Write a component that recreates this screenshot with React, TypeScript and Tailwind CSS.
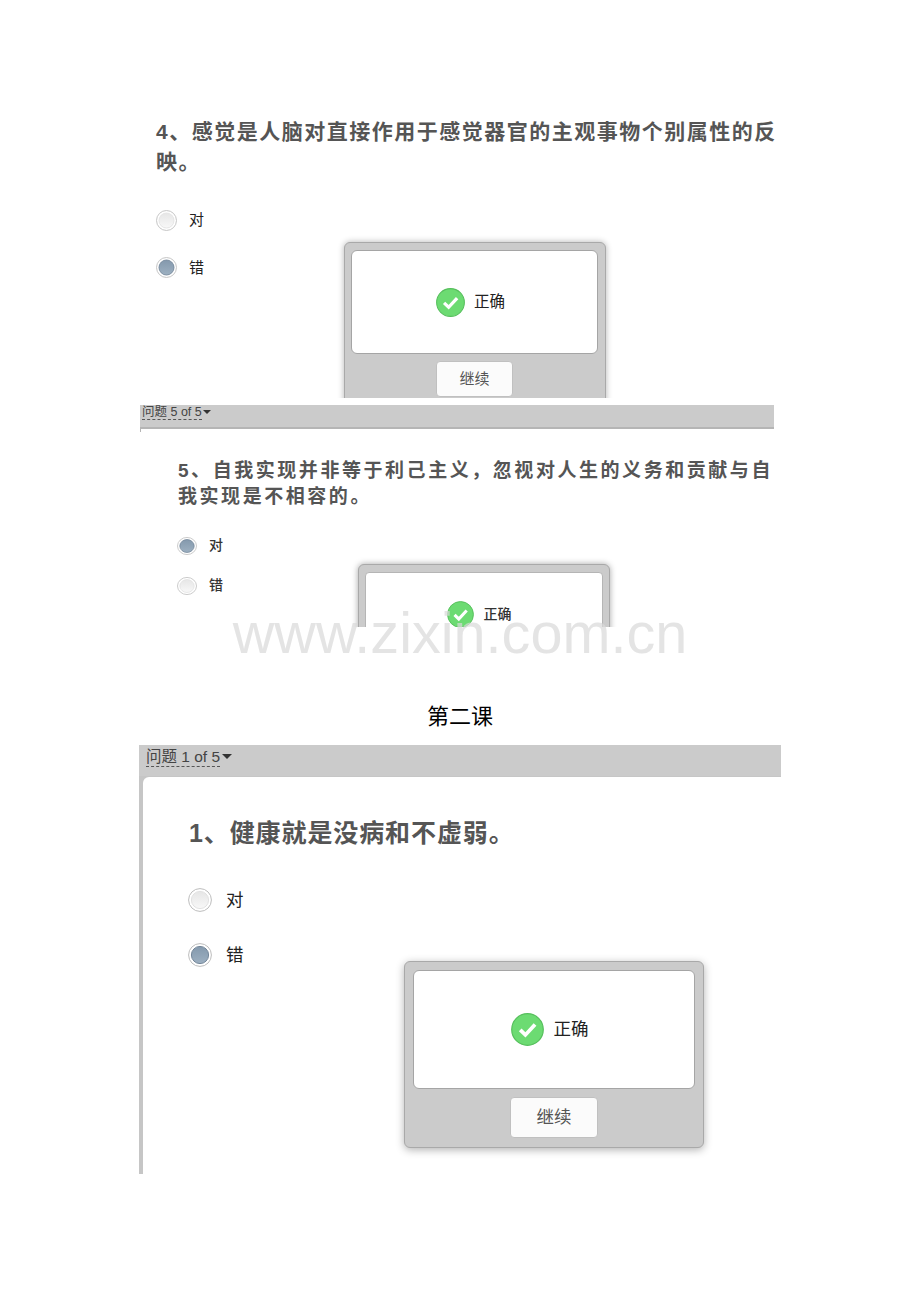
import React from 'react';

const cjk = "font-['Liberation_Sans','Noto_Sans_CJK_SC',sans-serif]";

const CheckBadge = ({ size }: { size: number }) => (
    <svg width={size} height={size} viewBox="0 0 28 28" className="shrink-0">
        <circle cx="14" cy="14" r="13.4" fill="#6cdb72" stroke="#56bf5c" strokeWidth="1" />
        <path d="M7.8 14.4 L12.2 18.6 L20.4 9.8" fill="none" stroke="#ffffff" strokeWidth="3.2" />
    </svg>
);

const Radio = ({ checked, size, height }: { checked?: boolean; size: number; height?: number }) => (
    <svg width={size} height={height ?? size} viewBox="0 0 24 24" preserveAspectRatio="none" className="shrink-0">
        <defs>
            <linearGradient id="radio-off" x1="0" y1="0" x2="0" y2="1">
                <stop offset="0" stopColor="#e6e6e6" />
                <stop offset="1" stopColor="#f8f8f8" />
            </linearGradient>
            <linearGradient id="radio-on" x1="0" y1="0" x2="0" y2="1">
                <stop offset="0" stopColor="#8499ad" />
                <stop offset="1" stopColor="#9db0c1" />
            </linearGradient>
        </defs>
        <circle cx="12" cy="12" r="11.4" fill="#ffffff" stroke="#bdbdbd" strokeWidth="1" />
        <circle cx="12" cy="12" r="8.6" fill={checked ? 'url(#radio-on)' : 'url(#radio-off)'} stroke={checked ? '#74879a' : '#e2e2e2'} strokeWidth="1" />
    </svg>
);

const TopBar = ({ label, className, textClass, arrowClass }: { label: string; className: string; textClass: string; arrowClass: string }) => (
    <div className={`flex items-start bg-[#cbcbcb] ${className}`}>
        <span className={`border-b border-dashed border-[#555] text-[#444] ${textClass}`}>{label}</span>
        <span className={`border-x-transparent border-t-[#333] ${arrowClass}`}></span>
    </div>
);

export default function App() {
    return (
        <div className={`relative h-[1302px] w-[920px] overflow-hidden bg-white ${cjk}`}>
            {/* question 4 */}
            <div className="relative ml-[140px] h-[398px] w-[640px] overflow-hidden pl-[16px] pt-[117px]">
                <p className="w-[622px] text-[21px] leading-[30px] font-bold tracking-[1.5px] text-[#555]">
                    4、感觉是人脑对直接作用于感觉器官的主观事物个别属性的反映。
                </p>
                <div className="mt-[32px] flex items-center gap-[12px] text-[15px] text-[#222]">
                    <Radio size={21} />
                    <span>对</span>
                </div>
                <div className="mt-[25px] flex items-center gap-[12px] text-[15px] text-[#222]">
                    <Radio size={21} checked />
                    <span>错</span>
                </div>

                <div className="absolute left-[204px] top-[242px] h-[170px] w-[262px] rounded-[6px] border border-[#a9a9a9] bg-[#cbcbcb] pl-[6px] pr-[7px] pt-[7px] shadow-[0_0_6px_rgba(0,0,0,0.3)]">
                    <div className="flex h-[104px] items-center justify-center gap-[9px] rounded-[6px] border border-[#a5a5a5] bg-white pr-[8px] text-[15.5px] text-[#222]">
                        <CheckBadge size={29} />
                        <span>正确</span>
                    </div>
                    <div className="mx-auto mt-[7px] flex h-[36px] w-[77px] items-center justify-center rounded-[4px] border border-[#c0c0c0] bg-[#fbfbfb] text-[15px] text-[#555]">
                        继续
                    </div>
                </div>
            </div>

            {/* question 5 */}
            <div className="relative ml-[140px] mt-[7px] h-[222px] w-[634px] overflow-hidden">
                <TopBar
                    label="问题 5 of 5"
                    className="h-[24px] border-b-2 border-[#b5b5b5] pl-[2px] pt-[1px]"
                    textClass="text-[12.5px] leading-[13px]"
                    arrowClass="ml-[1px] mt-[4px] border-x-[4px] border-t-[4px]"
                />
                <div className="-mt-px mb-px ml-0 h-[4px] w-px bg-[#b5b5b5]"></div>
                <p className="ml-[38px] mt-[26px] w-[596px] text-[19px] leading-[26px] font-bold tracking-[2.55px] text-[#555]">
                    5、自我实现并非等于利己主义，忽视对人生的义务和贡献与自我实现是不相容的。
                </p>
                <div className="ml-[37px] mt-[25px] flex items-center gap-[12px] text-[14px] font-medium text-[#333]">
                    <Radio size={20} height={18} checked />
                    <span>对</span>
                </div>
                <div className="ml-[37px] mt-[19px] flex items-center gap-[12px] text-[14px] font-medium text-[#333]">
                    <Radio size={20} height={18} />
                    <span>错</span>
                </div>

                <div className="absolute left-[218px] top-[159px] h-[120px] w-[252px] rounded-[6px] border border-[#a9a9a9] bg-[#cbcbcb] px-[6px] pt-[7px] shadow-[0_0_6px_rgba(0,0,0,0.35)]">
                    <div className="flex h-[100px] items-start justify-center gap-[10px] rounded-[4px] border border-[#b5b5b5] bg-white pr-[10px] pt-[28px] text-[14px] font-medium text-[#333]">
                        <CheckBadge size={27} />
                        <span className="mt-[3px]">正确</span>
                    </div>
                </div>
            </div>

            {/* watermark */}
            <div className="absolute left-0 top-[600px] w-[920px] text-center font-['Liberation_Sans',sans-serif] text-[57.6px] leading-[66px] text-[#d8d8d8]/70">
                www.zixin.com.cn
            </div>

            <h2 className="mt-[76px] text-center text-[22px] leading-[28px] font-normal text-black">第二课</h2>

            {/* lesson 2, question 1 */}
            <div className="relative ml-[139px] mt-[14px] h-[429px] w-[642px] overflow-hidden">
                <TopBar
                    label="问题 1 of 5"
                    className="h-[31px] pl-[7px] pt-[3px]"
                    textClass="text-[15.5px] leading-[18px]"
                    arrowClass="ml-[2px] mt-[6px] border-x-[5px] border-t-[5px]"
                />
                <div className="h-[398px] bg-[#c6c6c6] pl-[4px] pt-px">
                    <div className="h-full rounded-tl-[6px] bg-white pl-[46px] pt-[40px]">
                        <p className="text-[25px] leading-[32px] font-bold tracking-[0.9px] text-[#555]">
                            1、健康就是没病和不虚弱。
                        </p>
                        <div className="-ml-[1px] mt-[38px] flex items-center gap-[14px] text-[17.5px] text-[#222]">
                            <Radio size={24} />
                            <span>对</span>
                        </div>
                        <div className="-ml-[1px] mt-[29px] flex items-center gap-[14px] text-[17.5px] text-[#222]">
                            <Radio size={24} checked />
                            <span>错</span>
                        </div>
                    </div>
                </div>

                <div className="absolute left-[265px] top-[216px] h-[187px] w-[300px] rounded-[6px] border border-[#a9a9a9] bg-[#cbcbcb] px-[8px] pt-[8px] shadow-[0_2px_8px_rgba(0,0,0,0.3)]">
                    <div className="flex h-[119px] items-center justify-center gap-[10px] rounded-[6px] border border-[#a5a5a5] bg-white pr-[9px] text-[17.5px] text-[#222]">
                        <CheckBadge size={33} />
                        <span>正确</span>
                    </div>
                    <div className="mx-auto mt-[8px] flex h-[41px] w-[88px] items-center justify-center rounded-[4px] border border-[#c0c0c0] bg-[#fbfbfb] text-[17.5px] text-[#555]">
                        继续
                    </div>
                </div>
            </div>
        </div>
    );
}
